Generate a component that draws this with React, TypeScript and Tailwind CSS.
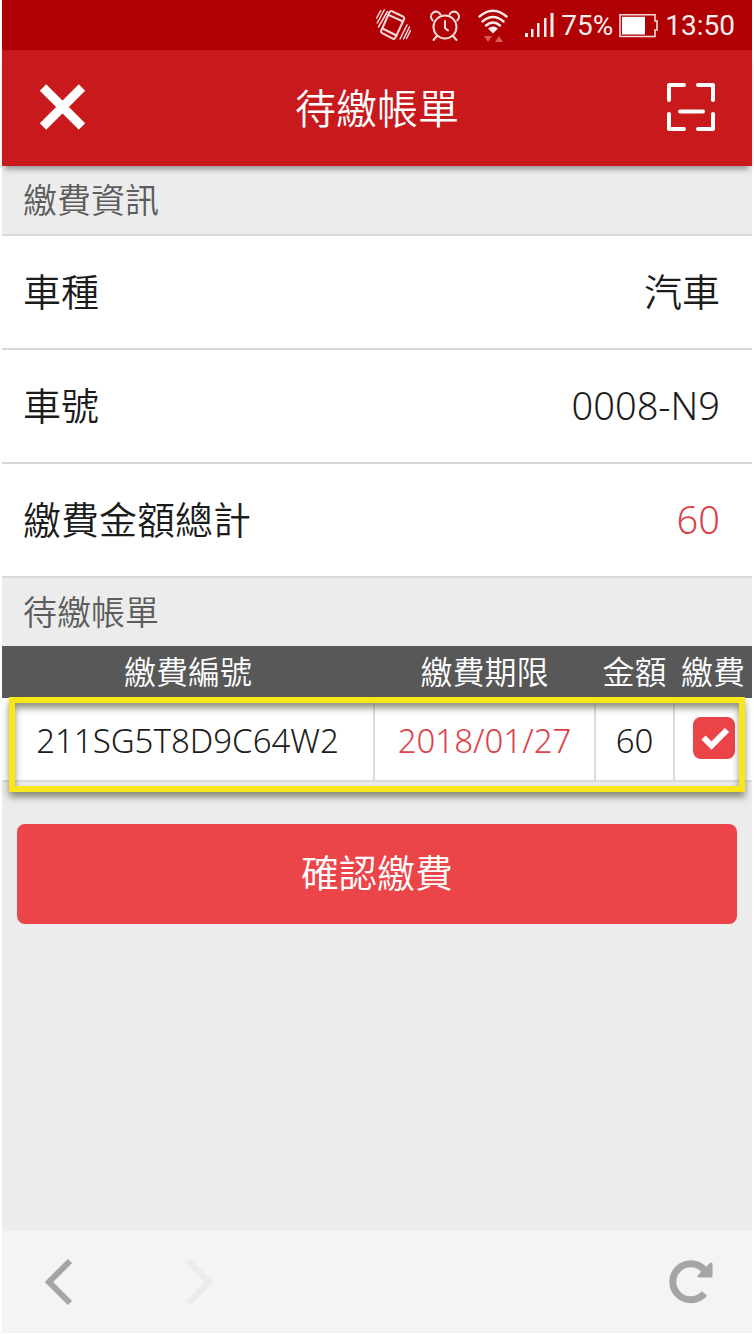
import React from 'react';

type Bill = { id: string; due: string; amount: number };

const info = [
  { label: '車種', value: '汽車', color: 'text-[#1c1c1c]' },
  { label: '車號', value: '0008-N9', color: 'text-[#1c1c1c]' },
  { label: '繳費金額總計', value: '60', color: 'text-[#dc4248]' },
];

const bills: Bill[] = [{ id: '211SG5T8D9C64W2', due: '2018/01/27', amount: 60 }];

function StatusBar() {
  return (
    <div className="flex h-[50px] items-center justify-end bg-[#b00003] pr-[17px] pt-0.5 font-['Roboto',sans-serif] text-[28px] leading-8 text-[#fbeeee]">
      {/* vibrate */}
      <svg className="mr-[18px] h-9 w-9" viewBox="0 0 36 36" fill="none" stroke="#f8dcdc" strokeWidth="2" strokeLinejoin="round" strokeLinecap="round">
        <path d="M14.500 4.200Q15.500 2.500 17.300 3.300L28 8.500Q29.800 9.500 29 11.200L20.500 29.500Q19.500 31.500 17.700 30.600L7.200 25.200Q5.500 24.200 6.300 22.500Z" />
        <path d="M13.500 6.800 28 13.500M7.500 20.500 21.500 27.500" />
        <path d="M5.700 2.700 1.700 10M9.200 2 2.300 15M12.500 3.500 3.500 19M34.500 19 28.500 31M32 17 25 31M35.500 22.500 31.500 30.500" strokeWidth="1.500" />
      </svg>
      {/* alarm */}
      <svg className="mr-4 h-8 w-8" viewBox="0 0 32 32" fill="none" stroke="#f8dcdc" strokeWidth="2" strokeLinecap="round">
        <circle cx="16" cy="17" r="11.500" />
        <path d="M16 11v7l3 2.500M8 26l-3.500 4M24 26l3.500 4" />
        <path d="M3.800 10.500A5 5 0 1 1 11.500 4.500M28.200 10.500A5 5 0 1 0 20.500 4.500" />
      </svg>
      {/* wifi */}
      <svg className="mr-3.5 h-9 w-8" viewBox="0 0 32 36" fill="none" stroke="#fbeeee" strokeWidth="2.400" strokeLinecap="round">
        <path d="M2.500 8.500Q16-3 29.500 8.500M5.500 13.500Q16 4.500 26.500 13.500M9 17.500Q16 11.500 23 17.500" />
        <path d="M11 20.500Q16 16.500 21 20.500L16 25.500Z" fill="#fbeeee" stroke="none" />
        <path d="M7 28h8l-4 6ZM18 34h8l-4-6Z" fill="#d9595c" stroke="none" />
      </svg>
      {/* signal */}
      <svg className="mr-1.5 h-7 w-8" viewBox="0 0 32 28" fill="#fbeeee">
        <path d="M2 21h3v4H2ZM8 17h2.500v8H8ZM14 11h2.500v14H14ZM21 6h2.500v19H21ZM27.500 1h3v24h-3Z" />
      </svg>
      <span>75%</span>
      <svg className="ml-1.5 mr-1.5 h-6 w-10" viewBox="0 0 40 24">
        <path d="M1 .800H36V7h2v9h-2v6.500H1Z" fill="none" stroke="#f8dcdc" strokeWidth="1.600" />
        <path d="M3 2.800H26V20.500H3Z" fill="#fff" />
      </svg>
      <span>13:50</span>
    </div>
  );
}

function Header() {
  return (
    <header className="relative z-10 flex h-[116px] items-center justify-between bg-[#c8191d] px-9 text-white shadow-[0_6px_6px_-3px_rgba(0,0,0,0.4)]">
      <button type="button" aria-label="關閉">
        <svg className="h-[50px] w-[50px]" viewBox="0 0 50 50" fill="none" stroke="currentColor" strokeWidth="9">
          <path d="M5 4.500 44 43.500M44 4.500 5 43.500" />
        </svg>
      </button>
      <h1 className="text-[41px] leading-[60px]">待繳帳單</h1>
      <button type="button" aria-label="掃描">
        <svg className="h-[50px] w-[50px]" viewBox="0 0 50 50" fill="none" stroke="currentColor" strokeWidth="4" strokeLinecap="round" strokeLinejoin="round">
          <path d="M3 17V2H18M32 2H47V17M47 31V46H32M18 46H3V31M14 28.500H37" />
        </svg>
      </button>
    </header>
  );
}

function SectionTitle({ children }: { children: React.ReactNode }) {
  return <h2 className="h-[68px] px-[21px] text-[34px] leading-[68px] text-[#5c5c5c]">{children}</h2>;
}

function BillCheckbox({ id }: { id: string }) {
  const [checked, setChecked] = React.useState(true);

  return (
    <label className="relative ml-[18px] block h-[42px] w-[42px]">
      <input
        type="checkbox"
        aria-label={`繳費 ${id}`}
        checked={checked}
        onChange={(e) => setChecked(e.target.checked)}
        className="block h-[42px] w-[42px] appearance-none rounded-lg border-2 border-[#ea4449] bg-white checked:bg-[#ea4449]"
      />
      {checked && (
        <svg className="pointer-events-none absolute inset-0 h-[42px] w-[42px]" viewBox="0 0 42 42" fill="none" stroke="#fff" strokeWidth="6">
          <path d="M10.500 20.500 18.500 28.500 34 13" />
        </svg>
      )}
    </label>
  );
}

function BillTable() {
  return (
    <div className="relative">
      <table className="w-full table-fixed border-collapse">
        <thead>
          <tr className="h-[52px] bg-[#585858] text-[32px] leading-[50px] text-white">
            <th className="p-0 font-[350]">繳費編號</th>
            <th className="w-[221px] p-0 font-[350]">繳費期限</th>
            <th className="w-[79px] p-0 font-[350]">金額</th>
            <th className="w-[78px] p-0 font-[350]">繳費</th>
          </tr>
        </thead>
        <tbody>
          {bills.map((bill) => (
            <tr key={bill.id} className="h-[83px] border-b-2 border-[#dcdcdc] bg-white text-center text-[33px] leading-[46px] text-[#1c1c1c]">
              <td className="p-0 pt-1">{bill.id}</td>
              <td className="border-x-2 border-[#dcdcdc] p-0 pt-1 text-[#dc4248]">{bill.due}</td>
              <td className="border-x-2 border-[#dcdcdc] p-0 pt-1">{bill.amount}</td>
              <td className="p-0 pb-0.5">
                <BillCheckbox id={bill.id} />
              </td>
            </tr>
          ))}
        </tbody>
      </table>
      {/* highlight frame around the bill rows */}
      <div className="pointer-events-none absolute -bottom-[10px] left-[7px] right-[7px] top-[51px] border-[6px] border-[#f9e71c] shadow-[0_5px_7px_rgba(70,70,40,0.6),inset_0_5px_7px_rgba(70,70,40,0.6)]" />
    </div>
  );
}

function BottomBar() {
  return (
    <nav className="flex h-[102px] items-center bg-[#f4f4f4] px-[37px] text-[#a5a5a5]">
      <button type="button" aria-label="上一頁">
        <svg className="h-12 w-10" viewBox="0 0 40 48" fill="none" stroke="currentColor" strokeWidth="6">
          <path d="M31 3 10 24 31 45" />
        </svg>
      </button>
      <button type="button" aria-label="下一頁" disabled className="ml-[98px] text-[#ebebeb]">
        <svg className="h-12 w-10" viewBox="0 0 40 48" fill="none" stroke="currentColor" strokeWidth="6">
          <path d="M11 3 32 24 11 45" />
        </svg>
      </button>
      <button type="button" aria-label="重新整理" className="ml-auto">
        <svg className="h-12 w-12" viewBox="0 0 48 48" fill="none" stroke="currentColor" strokeWidth="7">
          <path d="M37.500 35.500A18 18 0 1 1 37 11.500" />
          <path d="M44 6V18H32Z" fill="currentColor" strokeWidth="3" strokeLinejoin="round" />
        </svg>
      </button>
    </nav>
  );
}

export default function App() {
  return (
    <div className="min-h-screen bg-white px-[2px] pb-px font-['Noto_Sans','Noto_Sans_CJK_TC',sans-serif]">
      <div className="flex min-h-[calc(100vh-1px)] flex-col bg-[#ececec]">
        <StatusBar />
        <div className="flex flex-1 flex-col font-[350]">
          <Header />
          <main className="flex-1">
            <SectionTitle>繳費資訊</SectionTitle>
            <dl className="border-b-2 border-[#d8d8d8] bg-white text-[38px] leading-[56px]">
              {info.map((row) => (
                <div key={row.label} className="flex h-[114px] items-center justify-between border-t-2 border-[#d8d8d8] pb-0.5 pl-[21px] pr-8">
                  <dt className="text-[#1c1c1c]">{row.label}</dt>
                  <dd className={row.color}>{row.value}</dd>
                </div>
              ))}
            </dl>
            <SectionTitle>待繳帳單</SectionTitle>
            <BillTable />
            <div className="px-[15px] pt-[42px]">
              <button type="button" className="h-[100px] w-full rounded-lg bg-[#eb4449] pb-1 text-[38px] leading-[56px] text-white">
                確認繳費
              </button>
            </div>
          </main>
          <BottomBar />
        </div>
      </div>
    </div>
  );
}
